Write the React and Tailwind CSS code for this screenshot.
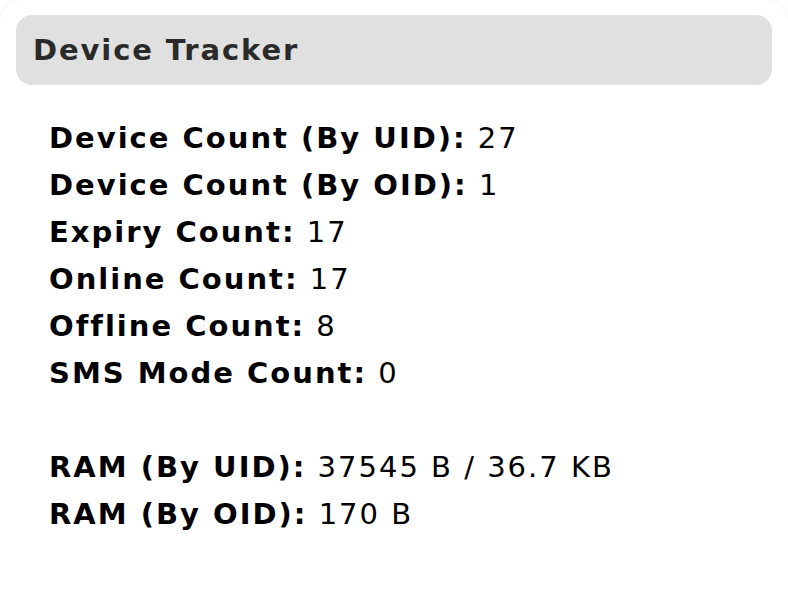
import React from "react";

const rows = [
  ["Device Count (By UID):", "27"],
  ["Device Count (By OID):", "1"],
  ["Expiry Count:", "17"],
  ["Online Count:", "17"],
  ["Offline Count:", "8"],
  ["SMS Mode Count:", "0"],
];

export default function App() {
  return (
    <div className="w-[788px] h-[600px] bg-white overflow-hidden" style={{ fontFamily: '"DejaVu Sans", Verdana, sans-serif' }}>
      <div className="h-[640px] rounded-[24px] bg-white shadow-[0_0_10px_rgba(0,0,0,0.06)] px-4 pt-[15px]">
        <div className="h-[70px] rounded-2xl bg-[#e0e0e0] flex items-center px-[17px]">
          <h2 className="text-[29px] font-bold text-[#2a2a2a] leading-none tracking-[1.9px]">Device Tracker</h2>
        </div>
        <div className="pl-[33px] pt-[30px] text-[29px] leading-[47px] text-black tracking-[2px]">
          {rows.map(([k, v]) => (
            <div key={k}>
              <span className="font-bold">{k}</span> {v}
            </div>
          ))}
          <div className="h-[47px]" />
          <div>
            <span className="font-bold">RAM (By UID):</span> 37545 B / 36.7 KB
          </div>
          <div>
            <span className="font-bold">RAM (By OID):</span> 170 B
          </div>
        </div>
      </div>
    </div>
  );
}
